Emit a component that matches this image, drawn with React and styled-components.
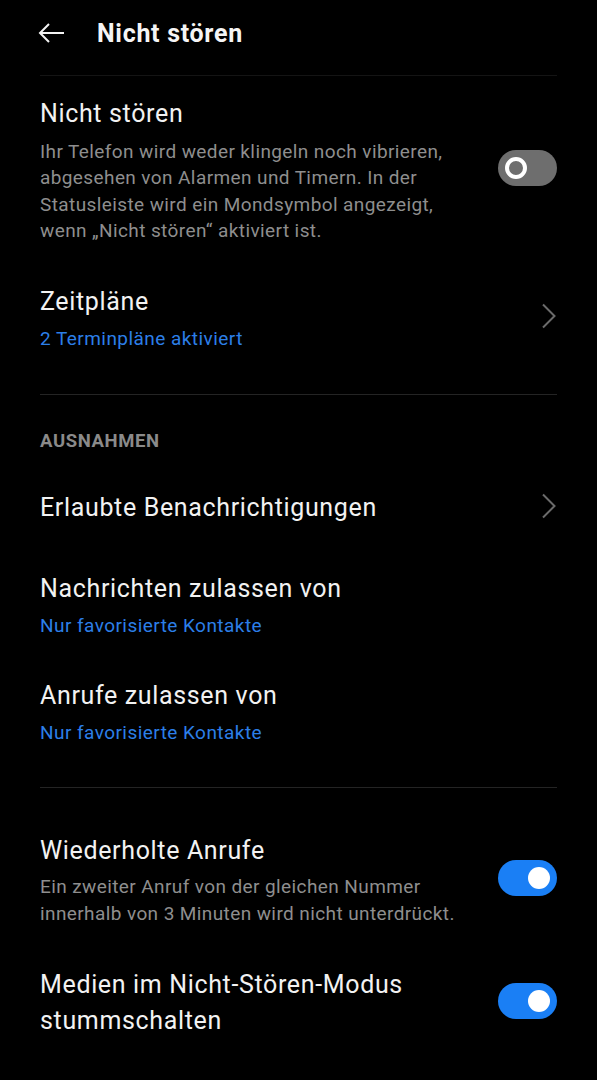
import React from 'react';
import styled, { createGlobalStyle } from 'styled-components';

const GlobalStyle = createGlobalStyle`
    html, body {
        margin: 0;
        padding: 0;
        background: #000;
    }
    body {
        font-family: Roboto, "Noto Sans", "Liberation Sans", sans-serif;
        -webkit-font-smoothing: antialiased;
    }
`;

const Screen = styled.div`
    width: 597px;
    min-height: 1080px;
    background: #000;
    color: #f2f2f2;
    box-sizing: border-box;
`;

const Header = styled.div`
    display: flex;
    align-items: center;
    height: 66px;
    padding: 0 38px;
    gap: 32px;

    h1 {
        margin: 0;
        font-size: 25px;
        font-weight: 700;
        color: #f5f5f5;
        letter-spacing: 0.7px;
    }
`;

const BackButton = styled.div`
    display: inline-flex;
    width: 27px;
    height: 20px;
    align-items: center;
`;

const Content = styled.div`
    padding: 0 40px;
`;

const Divider = styled.div`
    height: 1px;
    background: ${p => (p.$faint ? '#141414' : '#242424')};
    margin: ${p => p.$margin || '23px 0'};
`;

const Row = styled.div`
    display: flex;
    align-items: center;
    justify-content: space-between;
    gap: 24px;
    padding: ${p => p.$pad || '19.5px 0'};
`;

const Texts = styled.div`
    display: flex;
    flex-direction: column;
    flex: 1;
`;

const Title = styled.div`
    font-size: 25px;
    line-height: 36px;
    letter-spacing: 0.65px;
    color: #f2f2f2;
`;

const Description = styled.div`
    font-size: 19px;
    line-height: ${p => p.$lh || '26.5px'};
    letter-spacing: 0.4px;
    color: #8e8e8e;
    margin-top: ${p => p.$mt || '7px'};
`;

const Summary = styled.div`
    font-size: 19px;
    line-height: 26px;
    letter-spacing: 0.45px;
    color: #2c7fe8;
    margin-top: 6px;
`;

const SectionLabel = styled.div`
    font-size: 18.5px;
    font-weight: 700;
    line-height: 24px;
    letter-spacing: 0.6px;
    color: #8a8a8a;
    padding: 11px 0 15px;
`;

const Track = styled.div`
    position: relative;
    flex-shrink: 0;
    width: 59px;
    height: 36px;
    margin-bottom: 4px;
    border-radius: 18px;
    background: ${p => (p.$on ? '#1a7ff5' : '#6e6e6e')};
`;

const Knob = styled.div`
    position: absolute;
    top: 7px;
    left: ${p => (p.$on ? '30px' : '7px')};
    width: 22px;
    height: 22px;
    border-radius: 50%;
    box-sizing: border-box;
    background: ${p => (p.$on ? '#fff' : 'transparent')};
    border: ${p => (p.$on ? 'none' : '4px solid #fff')};
`;

const ChevronBox = styled.div`
    display: inline-flex;
    flex-shrink: 0;
    margin-bottom: 4px;
`;

function Toggle({ on }) {
    return (
        <Track $on={on}>
            <Knob $on={on} />
        </Track>
    );
}

function Chevron() {
    return (
        <ChevronBox>
            <svg width="16" height="26" viewBox="0 0 16 26">
                <path d="M2 1.5 L13.5 13 L2 24.5" fill="none" stroke="#6b6b6b" strokeWidth="2" />
            </svg>
        </ChevronBox>
    );
}

export default function App() {
    return (
        <Screen>
            <GlobalStyle />
            <Header>
                <BackButton>
                    <svg width="27" height="20" viewBox="0 0 27 20">
                        <path d="M26 10 H2 M11 1 L2 10 L11 19" fill="none" stroke="#f2f2f2" strokeWidth="2" />
                    </svg>
                </BackButton>
                <h1>Nicht stören</h1>
            </Header>
            <Content>
                <Divider $faint $margin="9px 0 0" />
                <Row>
                    <Texts>
                        <Title>Nicht stören</Title>
                        <Description>
                            Ihr Telefon wird weder klingeln noch vibrieren, abgesehen von Alarmen und Timern. In der Statusleiste wird ein Mondsymbol angezeigt, wenn „Nicht stören“ aktiviert ist.
                        </Description>
                    </Texts>
                    <Toggle on={false} />
                </Row>
                <Row>
                    <Texts>
                        <Title>Zeitpläne</Title>
                        <Summary>2 Terminpläne aktiviert</Summary>
                    </Texts>
                    <Chevron />
                </Row>
                <Divider />
                <SectionLabel>AUSNAHMEN</SectionLabel>
                <Row $pad="21.5px 0 25.5px">
                    <Texts>
                        <Title>Erlaubte Benachrichtigungen</Title>
                    </Texts>
                    <Chevron />
                </Row>
                <Row>
                    <Texts>
                        <Title>Nachrichten zulassen von</Title>
                        <Summary>Nur favorisierte Kontakte</Summary>
                    </Texts>
                </Row>
                <Row>
                    <Texts>
                        <Title>Anrufe zulassen von</Title>
                        <Summary>Nur favorisierte Kontakte</Summary>
                    </Texts>
                </Row>
                <Divider $margin="22px 0 25px" />
                <Row $pad="19.5px 0 20.5px">
                    <Texts>
                        <Title>Wiederholte Anrufe</Title>
                        <Description $lh="27px" $mt="4px">
                            Ein zweiter Anruf von der gleichen Nummer innerhalb von 3 Minuten wird nicht unterdrückt.
                        </Description>
                    </Texts>
                    <Toggle on />
                </Row>
                <Row>
                    <Texts>
                        <Title>Medien im Nicht-Stören-Modus stummschalten</Title>
                    </Texts>
                    <Toggle on />
                </Row>
            </Content>
        </Screen>
    );
}
